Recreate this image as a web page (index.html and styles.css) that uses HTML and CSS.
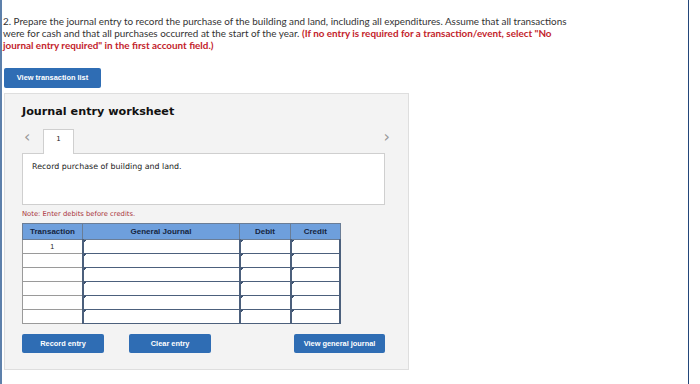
FILE: index.html
```html
<!doctype html>
<html>
<head>
  <link rel="stylesheet" href="styles.css">
</head>
<body>
  <div class="frame">
    <p class="question">2. Prepare the journal entry to record the purchase of the building and land, including all expenditures. Assume that all transactions were for cash and that all purchases occurred at the start of the year. <strong class="warn">(If no entry is required for a transaction/event, select "No journal entry required" in the first account field.)</strong></p>

    <button class="btn btn-list">View transaction list</button>

    <div class="panel">
      <h2 class="title">Journal entry worksheet</h2>

      <div class="tabs">
        <span class="arrow">&lsaquo;</span>
        <span class="tab">1</span>
        <span class="arrow arrow-right">&rsaquo;</span>
      </div>
      <div class="desc">Record purchase of building and land.</div>

      <p class="note">Note: Enter debits before credits.</p>

      <table class="journal">
        <tr>
          <th class="c-tr">Transaction</th>
          <th class="c-gj">General Journal</th>
          <th class="c-dr">Debit</th>
          <th class="c-cr">Credit</th>
        </tr>
        <tr><td class="num">1</td><td class="inp"></td><td class="inp"></td><td class="inp"></td></tr>
        <tr><td class="num"></td><td class="inp"></td><td class="inp"></td><td class="inp"></td></tr>
        <tr><td class="num"></td><td class="inp"></td><td class="inp"></td><td class="inp"></td></tr>
        <tr><td class="num"></td><td class="inp"></td><td class="inp"></td><td class="inp"></td></tr>
        <tr><td class="num"></td><td class="inp"></td><td class="inp"></td><td class="inp"></td></tr>
        <tr><td class="num"></td><td class="inp"></td><td class="inp"></td><td class="inp"></td></tr>
      </table>

      <div class="actions">
        <button class="btn btn-act">Record entry</button>
        <button class="btn btn-act btn-clear">Clear entry</button>
        <button class="btn btn-act btn-view">View general journal</button>
      </div>
    </div>
  </div>
</body>
</html>
```

FILE: styles.css
```css
body{
  margin:0;
  background:#fff;
  font-family:"Lato","Liberation Sans",sans-serif;
}
.frame{
  box-sizing:border-box;
  width:689px;
  height:384px;
  border-left:2px solid #5d80ab;
  border-right:1px solid #23467a;
  padding:16px 0 0 1px;
}
.question{
  margin:0;
  width:575px;
  font-size:9.9px;
  line-height:11.9px;
  color:#333;
}
.warn{
  color:#c3232b;
}
.btn{
  display:block;
  border:none;
  border-radius:2px;
  background:#2f6db4;
  color:#fff;
  font-family:"Liberation Sans",sans-serif;
  font-weight:bold;
  font-size:7.4px;
  padding:0;
  cursor:pointer;
}
.btn-list{
  margin:16px 0 0 1px;
  width:97px;
  height:20px;
}
.panel{
  box-sizing:border-box;
  margin:5px 0 0 1px;
  width:405px;
  height:277px;
  background:#f3f3f3;
  border:1px solid #dedede;
  padding:0 23px 0 17px;
  font-family:"DejaVu Sans",Verdana,sans-serif;
}
.title{
  margin:11px 0 0 0;
  font-size:11.2px;
  font-weight:bold;
  color:#111;
  line-height:14px;
}
.tabs{
  display:flex;
  align-items:flex-end;
  height:25px;
  margin-top:9px;
}
.arrow{
  width:21px;
  padding:0 0 7px 2px;
  box-sizing:border-box;
  align-self:center;
  font-size:16px;
  color:#999;
  line-height:16px;
}
.arrow-right{
  margin-left:auto;
  margin-right:-5px;
  width:auto;
  padding:0 0 7px 0;
}
.tab{
  box-sizing:border-box;
  width:31px;
  height:25px;
  background:#fff;
  border:1px solid #cfcfcf;
  border-bottom:none;
  margin-bottom:-1px;
  text-align:center;
  font-size:7px;
  line-height:18px;
  color:#222;
  position:relative;
}
.desc{
  box-sizing:border-box;
  height:52px;
  background:#fff;
  border:1px solid #cfcfcf;
  padding:8px 9px;
  font-size:7.9px;
  color:#222;
}
.note{
  margin:5px 0 0 0;
  font-size:6.8px;
  color:#a9343b;
  line-height:8px;
}
.journal{
  margin-top:5px;
  border-collapse:collapse;
  width:319px;
  background:#fff;
  border:1px solid #888;
}
.journal th{
  height:15px;
  padding:0;
  background:#6e9fdc;
  border:1px solid #6a7d96;
  font-family:"Liberation Sans",sans-serif;
  font-size:8px;
  color:#152540;
}
.c-tr{width:59px;}
.c-gj{width:156px;}
.c-dr{width:50px;}
.journal td{
  height:13px;
  padding:0;
}
.num{
  border:1px solid #9a9a9a;
  text-align:center;
  font-family:"Liberation Sans",sans-serif;
  font-size:7px;
  color:#222;
}
.inp{
  border:2px solid #4c607c;
  border-top-width:1px;
  border-bottom-width:1px;
  background:linear-gradient(135deg,#3c5270 0,#3c5270 2px,#fff 2px) no-repeat;
  background-size:4px 4px;
}
.actions{
  display:flex;
  margin-top:10px;
}
.btn-act{
  width:84px;
  height:19px;
}
.btn-clear{
  margin-left:25px;
}
.btn-view{
  margin-left:83px;
  width:93px;
}
```
